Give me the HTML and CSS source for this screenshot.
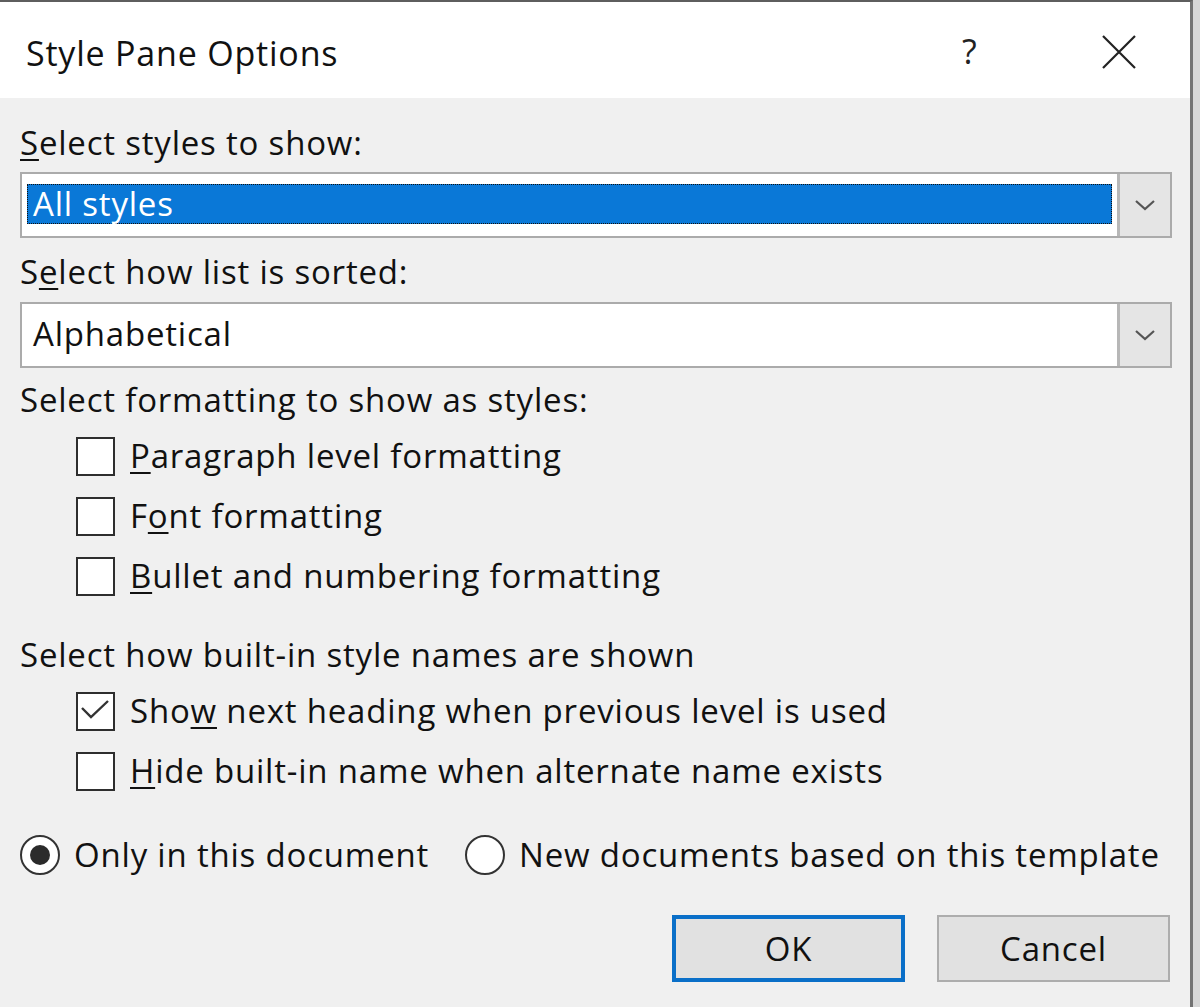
FILE: index.html
```html
<!DOCTYPE html>
<html>
<head>
<meta charset="utf-8">
<link rel="stylesheet" href="styles.css">
</head>
<body>
<div class="window">
  <div class="titlebar">
    <span class="title">Style Pane Options</span>
    <span class="help">?</span>
    <span class="close">
      <svg width="34" height="34" viewBox="0 0 34 34"><path d="M1 1 L33 33 M33 1 L1 33" stroke="#222" stroke-width="2.2" fill="none"/></svg>
    </span>
  </div>
  <div class="content">
    <div class="label l1"><u>S</u>elect styles to show:</div>
    <div class="combo c1">
      <div class="field"><span class="selected">All styles</span></div>
      <div class="arrow"><svg width="22" height="12" viewBox="0 0 22 12"><path d="M2 2 L11 10 L20 2" stroke="#555" stroke-width="2.2" fill="none"/></svg></div>
    </div>
    <div class="label l2">S<u>e</u>lect how list is sorted:</div>
    <div class="combo c2">
      <div class="field"><span class="value">Alphabetical</span></div>
      <div class="arrow"><svg width="22" height="12" viewBox="0 0 22 12"><path d="M2 2 L11 10 L20 2" stroke="#555" stroke-width="2.2" fill="none"/></svg></div>
    </div>
    <div class="label l3">Select formatting to show as styles:</div>
    <div class="checks">
      <div class="row"><span class="box"></span><span><u>P</u>aragraph level formatting</span></div>
      <div class="row"><span class="box"></span><span>F<u>o</u>nt formatting</span></div>
      <div class="row"><span class="box"></span><span><u>B</u>ullet and numbering formatting</span></div>
    </div>
    <div class="label l4">Select how built-in style names are shown</div>
    <div class="checks">
      <div class="row"><span class="box"><svg width="38" height="38" viewBox="0 0 38 38"><path d="M6 16 L15 25 L32 9" stroke="#333" stroke-width="2.4" fill="none"/></svg></span><span>Sho<u>w</u> next heading when previous level is used</span></div>
      <div class="row"><span class="box"></span><span><u>H</u>ide built-in name when alternate name exists</span></div>
    </div>
    <div class="radios">
      <div class="radio"><span class="circle on"></span><span>Only in this document</span></div>
      <div class="radio r2"><span class="circle"></span><span>New documents based on this template</span></div>
    </div>
    <div class="buttons">
      <div class="btn ok">OK</div>
      <div class="btn cancel">Cancel</div>
    </div>
  </div>
</div>
</body>
</html>
```
FILE: styles.css
```css
html, body {
  margin: 0;
  padding: 0;
}
body {
  background: #d6d6d6;
  width: 1200px;
  height: 1007px;
  overflow: hidden;
  font-family: "Open Sans", "Noto Sans", sans-serif;
  font-size: 33px;
  font-weight: 500;
  letter-spacing: 0.8px;
  color: #111;
}
.window {
  width: 1190px;
  height: 1005px;
  border-top: 2px solid #5e5e5e;
  border-right: 3px solid #727272;
  background: #f0f0f0;
  display: flex;
  flex-direction: column;
}
.titlebar {
  height: 96px;
  background: #ffffff;
  display: flex;
  align-items: center;
  padding-left: 26px;
  position: relative;
}
.title {
  font-size: 34px;
  font-weight: 400;
  color: #111;
  margin-top: 6px;
}
.help {
  position: absolute;
  left: 962px;
  top: 26px;
  font-size: 34px;
  font-weight: 400;
  color: #222;
}
.close {
  position: absolute;
  left: 1102px;
  top: 33px;
  line-height: 0;
}
.content {
  padding: 25px 0 0 20px;
  display: flex;
  flex-direction: column;
}
u {
  text-decoration-thickness: 2px;
  text-underline-offset: 4px;
}
.label {
  height: 40px;
  line-height: 40px;
  white-space: nowrap;
}
.combo {
  width: 1152px;
  height: 66px;
  box-sizing: border-box;
  border: 2px solid #ababab;
  background: #fff;
  display: flex;
}
.c1 { margin-top: 9px; }
.l2 { margin-top: 14px; }
.c2 { margin-top: 10px; }
.l3 { margin-top: 12px; }
.l4 { margin-top: 29px; }
.field {
  flex: 1;
  display: flex;
  align-items: center;
  padding: 0 5px 0 5px;
}
.selected {
  flex: 1;
  height: 40px;
  line-height: 38px;
  box-sizing: border-box;
  background: #0a78d7;
  color: #fff;
  border: 1px dotted #111;
  padding-left: 5px;
  margin-top: -2px;
}
.value {
  padding-left: 6px;
  line-height: 40px;
  margin-top: -2px;
}
.arrow {
  width: 53px;
  box-sizing: border-box;
  background: #e5e5e5;
  border-left: 3px solid #b7b7b7;
  display: flex;
  align-items: center;
  justify-content: center;
}
.checks {
  display: flex;
  flex-direction: column;
  padding-left: 56px;
  margin-top: 6px;
}
.row {
  height: 60px;
  display: flex;
  align-items: center;
  gap: 15px;
  white-space: nowrap;
  line-height: 60px;
}
.box {
  width: 39px;
  height: 39px;
  box-sizing: border-box;
  border: 2px solid #2e2e2e;
  background: #fff;
  line-height: 0;
  position: relative;
}
.box svg {
  position: absolute;
  left: -2px;
  top: -2px;
}
.radios {
  display: flex;
  height: 60px;
  margin-top: 24px;
  align-items: center;
  white-space: nowrap;
}
.radio {
  display: flex;
  align-items: center;
  gap: 14px;
  line-height: 60px;
}
.r2 {
  margin-left: 36px;
}
.circle {
  width: 40px;
  height: 40px;
  box-sizing: border-box;
  border: 2px solid #333;
  border-radius: 50%;
  background: #fff;
  display: flex;
  align-items: center;
  justify-content: center;
}
.circle.on::after {
  content: "";
  width: 20px;
  height: 20px;
  border-radius: 50%;
  background: #2b2b2b;
}
.buttons {
  display: flex;
  justify-content: flex-end;
  gap: 32px;
  margin-top: 30px;
  padding-right: 20px;
}
.btn {
  width: 233px;
  height: 67px;
  box-sizing: border-box;
  background: #e1e1e1;
  display: flex;
  align-items: center;
  justify-content: center;
}
.ok {
  border: 4px solid #0a6fc8;
}
.cancel {
  border: 2px solid #adadad;
}
```
